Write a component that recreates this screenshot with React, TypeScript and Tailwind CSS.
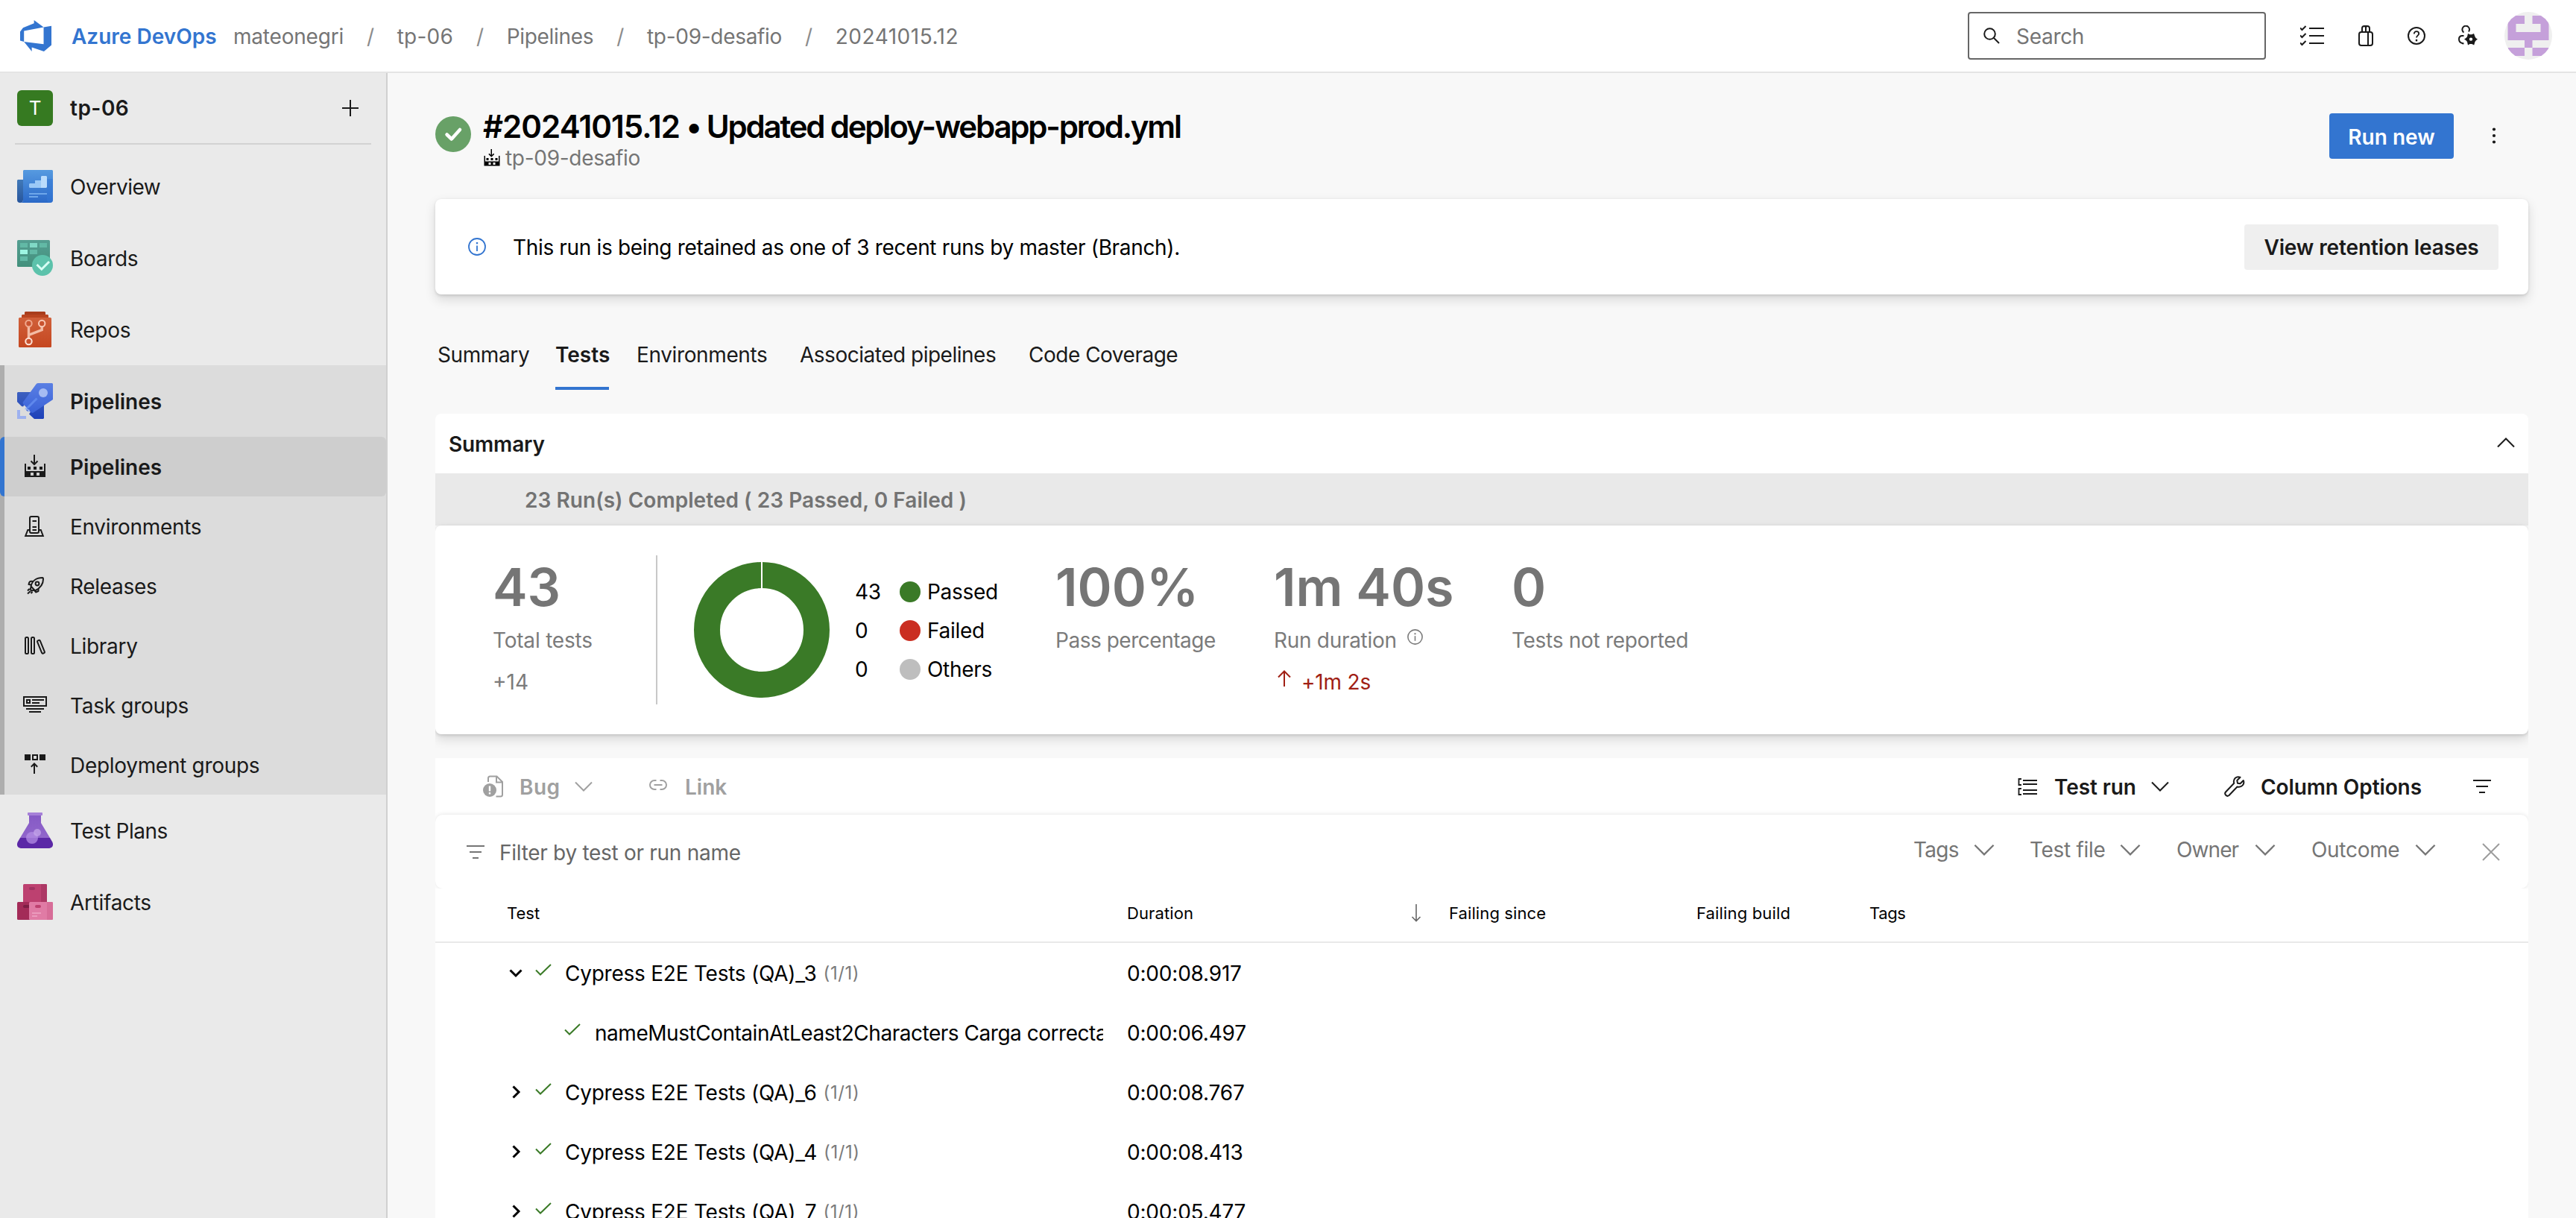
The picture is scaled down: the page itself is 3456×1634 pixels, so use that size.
import React from 'react';

type IconProps = { className?: string };

/* ---------- shared glyphs ---------- */

const BuildIcon = ({ className }: IconProps) => (
  <svg viewBox="0 0 32 32" className={className} fill="currentColor">
    <path fillRule="evenodd" d="M2 12h2v10h24V12h2v18H2zM10 24v4h4v-4zM18 24v4h4v-4z" />
    <path d="M6 16h4v4H6zM14 16h4v4h-4zM22 16h4v4h-4z" />
    <path d="M15 0v12.500M10.500 8.500l4.500 4.500 4.500-4.500" fill="none" stroke="currentColor" strokeWidth="2" />
  </svg>
);

const ChevronDown = ({ className }: IconProps) => (
  <svg viewBox="0 0 24 14" className={className} fill="none" stroke="currentColor" strokeWidth="2">
    <path d="M1 1.500l11 11 11-11" />
  </svg>
);

const InfoIcon = ({ className }: IconProps) => (
  <svg viewBox="0 0 24 24" className={className} fill="none" stroke="currentColor" strokeWidth="1.800">
    <circle cx="12" cy="12" r="11" />
    <path d="M12 10.500v7.500" />
    <path d="M12 6v2.300" strokeWidth="2.300" />
  </svg>
);

const FilterIcon = ({ className }: IconProps) => (
  <svg viewBox="0 0 24 20" className={className} fill="none" stroke="currentColor" strokeWidth="2">
    <path d="M0 2h24M4 10h16M8 18h8" />
  </svg>
);

const CheckIcon = ({ className }: IconProps) => (
  <svg viewBox="0 0 22 16" className={className} fill="none" stroke="#3a7a27" strokeWidth="2">
    <path d="M1 8.500l6 6L21 1" />
  </svg>
);

/* ---------- sidebar icons ---------- */

const OverviewIcon = () => (
  <svg viewBox="0 0 48 48" className="size-12">
    <defs>
      <linearGradient id="ov" x1="0" y1="0" x2="0" y2="1">
        <stop offset="0" stopColor="#569ae0" />
        <stop offset="1" stopColor="#2b69c8" />
      </linearGradient>
      <linearGradient id="ovl" x1="0" y1="0" x2="0" y2="1">
        <stop offset="0" stopColor="#4179b8" />
        <stop offset="1" stopColor="#27559c" />
      </linearGradient>
    </defs>
    <path d="M1 15h7v27a4 4 0 0 1-8 0V16z" fill="url(#ovl)" />
    <path d="M9 2h38l1 1v39a4 4 0 0 1-4 4H4a4 4 0 0 0 4-4V3z" fill="url(#ov)" />
    <path d="M40 14h8v28a4 4 0 0 1-8 0z" fill="#3478d6" opacity=".5" />
    <path d="M16 21l1-1h7v-4h8v10H17l-1-1z" fill="#9cc9f6" />
    <path d="M32 11l1-1h6l1 1v14l-1 1h-7z" fill="#bbdcfc" />
    <path d="M16 33h24v2H16zM16 37h12v2H16z" fill="#6ea7ea" />
  </svg>
);

const BoardsIcon = () => (
  <svg viewBox="0 0 48 48" className="size-12">
    <defs>
      <linearGradient id="bd" x1="0" y1="0" x2="0" y2="1">
        <stop offset="0" stopColor="#559f92" />
        <stop offset="1" stopColor="#43907c" />
      </linearGradient>
    </defs>
    <rect width="44" height="36" rx="1.500" fill="url(#bd)" />
    <path d="M4 4h10v6H4zM30 4h10v6H30zM17 13h10v6H17zM4 22h10v6H4z" fill="#62b9a6" />
    <path d="M17 4h10v6H17z" fill="#80d9c6" />
    <path d="M4 13h10v6H4z" fill="#9df5e2" />
    <circle cx="34" cy="34" r="14" fill="#5cc2ab" />
    <path d="M26.500 33l6.300 6.200L43 29" fill="none" stroke="#d8fff5" strokeWidth="3" />
  </svg>
);

const ReposIcon = () => (
  <svg viewBox="0 0 48 48" className="size-12">
    <defs>
      <linearGradient id="rp" x1="0" y1="0" x2="0" y2="1">
        <stop offset="0" stopColor="#d0603a" />
        <stop offset="1" stopColor="#c54720" />
      </linearGradient>
    </defs>
    <path d="M11 0h26l1 1v4H10V1z" fill="#a93d1c" />
    <path d="M7 4h34l1 1v4H6V5z" fill="#b94520" />
    <rect x="2" y="8" width="44" height="40" rx="1.500" fill="url(#rp)" />
    <path d="M15.500 20v16M33.200 20v4.500L15.500 31.500v4" fill="none" stroke="#f3bba4" strokeWidth="3.400" />
    <g fill="#c95330" stroke="#f9c9b5" strokeWidth="2">
      <circle cx="15.500" cy="16" r="4.200" stroke="#f0a98e" />
      <circle cx="33.200" cy="16" r="4.200" />
      <circle cx="15.500" cy="40" r="4.200" stroke="#fde3d8" />
    </g>
  </svg>
);

const PipelinesIcon = () => (
  <svg viewBox="0 0 48 48" className="size-12">
    <defs>
      <linearGradient id="pl" x1="0" y1="0" x2="0" y2="1">
        <stop offset="0" stopColor="#5a7fe3" />
        <stop offset="1" stopColor="#3a62d8" />
      </linearGradient>
      <linearGradient id="plb" x1="0" y1="0" x2="0" y2="1">
        <stop offset="0" stopColor="#3d60bf" />
        <stop offset="1" stopColor="#1d41ba" />
      </linearGradient>
    </defs>
    <path d="M1 12h20L9 30l-1 1.500L6 31l-6-6V13zM36 26v21l-1 1H23l-7-6.500 2-3z" fill="url(#plb)" />
    <path d="M28 0h19l1 1v21L21 40l-3-1-2-2-2 1-2-2 1-3-5-5-.500-2L25 2q1-2 3-2z" fill="url(#pl)" />
    <path d="M26.500 20.500L13 34" stroke="#5f88ec" strokeWidth="3" />
    <circle cx="35" cy="13" r="6" fill="#a6bbf2" />
    <path d="M10 35l2-3 2 3 3 1-2 3-1-3z" fill="#9fb9f4" />
    <path d="M0 36h4v8h8v4H0z" fill="#9db1ef" />
  </svg>
);

const TestPlansIcon = () => (
  <svg viewBox="0 0 48 48" className="size-12">
    <defs>
      <linearGradient id="tp" x1="0" y1="0" x2="0" y2="1">
        <stop offset="0" stopColor="#8559c5" />
        <stop offset="1" stopColor="#9166cb" />
      </linearGradient>
    </defs>
    <path d="M16 2h16v12l12 20H4l12-20z" fill="url(#tp)" />
    <path d="M4 34h40l3.200 5.500C49.500 44 47 48 43 48H5c-4 0-6.500-4-4.200-8.500z" fill="#5b28a6" />
    <rect x="14" width="20" height="4" rx=".8" fill="#a680d8" />
    <circle cx="20" cy="34" r="8" fill="#b48ee4" opacity=".75" />
    <circle cx="27" cy="27" r="5" fill="#c4a6ea" opacity=".75" />
  </svg>
);

const ArtifactsIcon = () => (
  <svg viewBox="0 0 48 48" className="size-12">
    <rect x="8" width="32" height="25" rx="1.500" fill="#bd4170" />
    <path d="M32 0h7l1 1v24h-8z" fill="#ad3865" />
    <rect y="24" width="20" height="24" rx="1.500" fill="#a32b58" />
    <rect x="16" y="24" width="32" height="24" rx="1.500" fill="#e07ba5" />
    <path d="M40 24h7l1 1v22l-1 1h-7z" fill="#d76d98" />
    <rect x="16" y="4" width="8" height="4" rx="2" fill="#a03362" />
    <path d="M10 28h6v4h-6a2 2 0 0 1 0-4z" fill="#7d1d43" />
    <rect x="24" y="28" width="8" height="4" rx="2" fill="#bd4170" />
    <path d="M20 38h12v2H20zM20 42h7v2h-7z" fill="#eb9bbd" />
  </svg>
);

const EnvironmentsIcon = () => (
  <svg viewBox="0 0 32 32" className="size-8" fill="none" stroke="currentColor" strokeWidth="2">
    <rect x="9" y="3" width="12" height="22" rx="2" />
    <path d="M12.500 9H18M12.500 17H18M12.500 21H18M9 21H6.300L3.200 29h23.600l-3-8H21" />
  </svg>
);

const ReleasesIcon = () => (
  <svg viewBox="0 0 32 32" className="size-8" fill="none" stroke="currentColor" strokeWidth="2" strokeLinejoin="round">
    <path d="M10.500 16.500C12 9 18 5 26 5c1 0 1 1 1 2 0 7-4 12-11 15.500z" />
    <circle cx="19" cy="13" r="2.400" />
    <path d="M13 10c-3-1-5 0-5.500 4l3 .500M20.500 20v3l-3.500 1.500-1.500-2M11 17l-1.500 3.500 2 2 4-1M6 22.500l2.500-2.500M6 26.500l4-3.500M10.500 26l2-2" />
  </svg>
);

const LibraryIcon = () => (
  <svg viewBox="0 0 32 32" className="size-8" fill="none" stroke="currentColor" strokeWidth="2">
    <rect x="3" y="5" width="4" height="22" rx="1.500" />
    <rect x="11" y="5" width="4" height="22" rx="1.500" />
    <rect x="22" y="8.500" width="4" height="18.500" rx="1.500" transform="rotate(-22 24 17.800)" />
  </svg>
);

const TaskGroupsIcon = () => (
  <svg viewBox="0 0 32 32" className="size-8" fill="none" stroke="currentColor" strokeWidth="2">
    <path d="M1 5h30v12H1zM5 9h4v4H5zM12 9h16M12 13h10M4 21h24M8 25h16" />
  </svg>
);

const DeploymentIcon = () => (
  <svg viewBox="0 0 32 32" className="size-8" fill="none" stroke="currentColor" strokeWidth="2">
    <path d="M3 3h6v6H3zM23 3h6v6h-6z" fill="currentColor" />
    <path d="M13 3h6v6h-6zM15 28V14.500M10.800 18.700L15 14.500l4.200 4.200" />
  </svg>
);

/* ---------- header ---------- */

const Slash = () => <span className="w-[71.700px] text-center text-[#8c8c8c]">/</span>;

const Avatar = () => (
  <svg viewBox="0 0 64 64" className="ml-9 size-16 rounded-full bg-[#efefef]" fill="#c5a0da">
    <path d="M4.500 5H27v11H15.500v11h33V16H37.500V5h22v33h-22v10h22v11h-22V48H27v11H4.500V48H27V38H4.500z" />
  </svg>
);

const Header = () => (
  <header className="flex h-[98px] shrink-0 items-center border-b-2 border-[#e4e4e4] bg-white pr-8 pl-[27px]">
    <svg viewBox="0 0 24 24" className="size-[42px]" fill="#3375d0">
      <path d="M0 8.877L2.247 5.910l8.405-3.416V.022l7.370 5.393L2.966 8.338v8.225L0 15.707zm24-4.450v14.651l-5.753 4.900-9.303-3.057v3.056l-5.978-7.416 15.057 1.798V5.415z" />
    </svg>
    <span className="mt-0.5 ml-[27px] w-[217px] font-semibold tracking-normal text-[#3375d0]">Azure DevOps</span>
    <nav className="mt-0.5 flex items-center text-[#757575]">
      <span className="tracking-[-0.2px]">mateonegri</span>
      <Slash />
      <span className="tracking-[0.2px]">tp-06</span>
      <Slash />
      <span>Pipelines</span>
      <Slash />
      <span>tp-09-desafio</span>
      <Slash />
      <span className="tracking-[0.5px]">20241015.12</span>
    </nav>
    <div className="ml-auto flex items-center text-[#1a1a1a]">
      <div className="flex h-16 w-[400px] items-center rounded border-2 border-[#666] pl-[19px]">
        <svg viewBox="0 0 22 22" className="size-[22px]" fill="none" stroke="currentColor" strokeWidth="2">
          <circle cx="8.500" cy="8.500" r="7.300" />
          <path d="M13.500 13.500L21 21" />
        </svg>
        <span className="mt-0.5 ml-[22px] text-[#757575]">Search</span>
      </div>
      <svg viewBox="0 0 32 28" className="ml-[46px] h-7 w-8" fill="none" stroke="currentColor" strokeWidth="2">
        <path d="M12 4h20M12 14h20M12 24h20M0 3.500l2.500 2.500L7.500 1M0 13.500L2.500 16l5-5M0 23.500L2.500 26l5-5" />
      </svg>
      <svg viewBox="0 0 20 28" className="ml-[46px] h-7 w-5" fill="none" stroke="currentColor" strokeWidth="2">
        <rect x="1" y="9" width="18" height="18" rx="3" />
        <path d="M13 9v18M5 9V4q0-3 3-3h4q3 0 3 3v5M10 9V3.500q0-2.500 2-2.500M10 3.500Q10 1 8 1" />
      </svg>
      <svg viewBox="0 0 24 24" className="ml-[46px] size-6" fill="none" stroke="currentColor" strokeWidth="2">
        <circle cx="12" cy="12" r="11" />
        <path d="M8.800 9.500C8.800 7.500 10 6.200 12 6.200s3.200 1.300 3.200 3c0 2.300-3.200 2.600-3.200 5.300" strokeWidth="1.800" />
        <path d="M12 16.800v2.600" strokeWidth="2.400" />
      </svg>
      <svg viewBox="0 0 26 28" className="ml-11 h-7 w-[26px]" fill="none" stroke="currentColor" strokeWidth="2">
        <path d="M7.500 9.500A4.800 4.800 0 1 1 14 8.500M7.500 14H5.500C2.500 14 1 16 1 18.500c0 3 2.500 5.500 6.500 6" />
        <g fill="currentColor" stroke="none">
          <path
            fillRule="evenodd"
            d="M13 11l2.500 1.300h2.700L21 11l1.500 4.200 1.300 2L26 18.500l-2.200 1.800-1.300 1.700-1.300 4.500-2.900-1.500h-2.700L13 26.500l-1-4.500-1.500-1.700-2.500-1.800 2.500-1.500 1.500-1.800zM17 16.400a2.200 2.200 0 1 0 0 4.400 2.200 2.200 0 0 0 0-4.400z"
          />
        </g>
      </svg>
      <Avatar />
    </div>
  </header>
);

/* ---------- sidebar ---------- */

const HubItem = ({ icon, label, bold, tight }: { icon: React.ReactNode; label: string; bold?: boolean; tight?: boolean }) => (
  <div className="flex h-24 items-center gap-[23px] pl-[23px]">
    {icon}
    <span className={bold ? 'mt-0.5 font-semibold tracking-normal' : tight ? 'mt-0.5 tracking-[-0.500px]' : 'mt-0.5'}>{label}</span>
  </div>
);

const SubItem = ({ icon, label, active }: { icon: React.ReactNode; label: string; active?: boolean }) => (
  <div
    className={
      active
        ? '-ml-1.5 flex h-20 items-center gap-[31px] overflow-hidden rounded-md border-l-[6px] border-[#3375d0] bg-[#cecece] pl-[25px] font-semibold tracking-normal'
        : 'flex h-20 items-center gap-[31px] pl-[25px]'
    }
  >
    {icon}
    <span className="mt-0.5">{label}</span>
  </div>
);

const Sidebar = () => (
  <aside className="w-[520px] shrink-0 border-r-2 border-[#d0d0d0] bg-[#eaeaea] text-[#1a1a1a]">
    <div className="flex h-[94px] items-center pr-[37px] pl-[23px]">
      <span className="flex size-12 items-center justify-center rounded-md bg-[#367a21] text-[26px] text-white">T</span>
      <span className="ml-[23px] font-semibold tracking-[0.500px]">tp-06</span>
      <svg viewBox="0 0 22 22" className="ml-auto size-[22px]" fill="none" stroke="currentColor" strokeWidth="2">
        <path d="M11 0v22M0 11h22" />
      </svg>
    </div>
    <div className="mx-5 mb-2 h-0.5 bg-[#d2d2d2]" />
    <HubItem icon={<OverviewIcon />} label="Overview" tight />
    <HubItem icon={<BoardsIcon />} label="Boards" />
    <HubItem icon={<ReposIcon />} label="Repos" />
    <div className="border-l-[6px] border-[#aeaeae] bg-[#dcdcdc]">
      <div className="-ml-1.5">
        <HubItem icon={<PipelinesIcon />} label="Pipelines" bold />
      </div>
      <SubItem icon={<BuildIcon className="size-8" />} label="Pipelines" active />
      <SubItem icon={<EnvironmentsIcon />} label="Environments" />
      <SubItem icon={<ReleasesIcon />} label="Releases" />
      <SubItem icon={<LibraryIcon />} label="Library" />
      <SubItem icon={<TaskGroupsIcon />} label="Task groups" />
      <SubItem icon={<DeploymentIcon />} label="Deployment groups" />
    </div>
    <HubItem icon={<TestPlansIcon />} label="Test Plans" tight />
    <HubItem icon={<ArtifactsIcon />} label="Artifacts" />
  </aside>
);

/* ---------- main ---------- */

const TitleBar = () => (
  <div className="flex h-[169px] pt-[44px]">
    <svg viewBox="0 0 48 48" className="mt-3.5 size-12" fill="none">
      <circle cx="24" cy="24" r="24" fill="#68a167" />
      <path d="M15.500 24.500l6.300 6L33 18" stroke="#fff" strokeWidth="4.500" strokeLinecap="round" strokeLinejoin="round" />
    </svg>
    <div className="ml-4">
      <h1 className="h-14 text-[42px] leading-[56px] font-semibold tracking-[-2.200px] text-black">
        <span className="tracking-[-0.930px]">#20241015.12</span>
        <span className="tracking-[-2.200px]"> • </span>Updated deploy-webapp-prod.yml
      </h1>
      <div className="flex h-7 items-center gap-1.5">
        <BuildIcon className="size-6" />
        <span className="text-[#757575]">tp-09-desafio</span>
      </div>
    </div>
    <button className="mt-2.5 ml-auto h-[61px] w-[167px] rounded bg-[#3375d0] pt-0.5 font-semibold tracking-normal text-white">Run new</button>
    <svg viewBox="0 0 6 24" className="mt-7 mr-[43px] ml-[51px] h-6 w-1.5" fill="#1a1a1a">
      <circle cx="3" cy="3.500" r="2.100" />
      <circle cx="3" cy="12" r="2.100" />
      <circle cx="3" cy="20.500" r="2.100" />
    </svg>
  </div>
);

const Banner = () => (
  <div className="flex h-32 items-center rounded-lg bg-white pr-10 pl-11 shadow-[0_6.400px_14.400px_rgba(0,0,0,0.130),0_1.200px_3.600px_rgba(0,0,0,0.110)]">
    <InfoIcon className="size-6 text-[#3375d0]" />
    <span className="mt-0.5 ml-9 tracking-[-0.340px] text-black">This run is being retained as one of 3 recent runs by master (Branch).</span>
    <button className="ml-auto h-[61px] w-[341px] rounded bg-[#efefef] pt-0.5 font-semibold tracking-[-0.120px] text-[#1a1a1a]">View retention leases</button>
  </div>
);

const Tabs = () => (
  <div className="flex h-[160px] items-start pt-11 pl-[3px] leading-[74px] text-[#1a1a1a]">
    <span className="w-[158px] tracking-[-0.400px]">Summary</span>
    <span className="mr-[37px] w-[72px] border-b-4 border-[#3375d0] pb-[6px] font-semibold tracking-normal">Tests</span>
    <span className="w-[219px] tracking-[-0.380px]">Environments</span>
    <span className="w-[307px] tracking-[-0.490px]">Associated pipelines</span>
    <span className="tracking-[-0.490px]">Code Coverage</span>
  </div>
);

const Stat = ({ value, label, className, children }: { value: string; label: React.ReactNode; className: string; children?: React.ReactNode }) => (
  <div className={className}>
    <div className="h-[84px] text-[70px] leading-[86px] font-semibold tracking-normal text-[#757575]">{value}</div>
    <div className="mt-[15px] flex h-[30px] items-center text-[#7b7b7b]">{label}</div>
    <div className="mt-[26px] flex h-[30px] items-center text-[#7b7b7b]">{children}</div>
  </div>
);

const legend = [
  { n: '43', color: 'bg-[#3a7a27]', label: 'Passed' },
  { n: '0', color: 'bg-[#ca2e21]', label: 'Failed' },
  { n: '0', color: 'bg-[#bebebe]', label: 'Others' },
];

const SummaryCard = () => (
  <section className="overflow-x-clip">
    <div className="flex h-20 items-center justify-between rounded-t-lg bg-white pr-[18px] pl-[18px]">
      <span className="mt-0.5 font-semibold tracking-[-0.150px] text-[#1a1a1a]">Summary</span>
      <ChevronDown className="mb-0.5 h-3.5 w-6 rotate-180 text-[#1a1a1a]" />
    </div>
    <div className="h-[70px] bg-[#e9e9e9] pl-[120px] leading-[72px] font-semibold tracking-[0.050px] text-[#737373]">
      23 Run(s) Completed ( 23 Passed, 0 Failed )
    </div>
    <div className="flex h-[280px] rounded-lg bg-white pt-10 shadow-[0_6.400px_14.400px_rgba(0,0,0,0.130),0_1.200px_3.600px_rgba(0,0,0,0.110)]">
      <Stat value="43" label={<span className="tracking-[-0.2px]">Total tests</span>} className="ml-[77px] w-[219px]">
        <span className="tracking-normal">+14</span>
      </Stat>
      <div className="h-[200px] w-0.5 bg-[#c8c8c8]" />
      <svg viewBox="0 0 182 182" className="mt-[9px] ml-[49px] size-[182px]" fill="none">
        <circle cx="91" cy="91" r="73.500" stroke="#3a7a27" strokeWidth="35" />
        <path d="M91 0v36" stroke="#fff" strokeWidth="2" />
      </svg>
      <div className="mt-[23px] ml-[34px] w-[269px] text-black">
        {legend.map((l) => (
          <div key={l.label} className="flex h-[52px] items-center">
            <span className="w-[60px]">{l.n}</span>
            <span className={`mr-[9px] size-7 rounded-full ${l.color}`} />
            <span>{l.label}</span>
          </div>
        ))}
      </div>
      <Stat value="100%" label={<span className="tracking-[-0.470px]">Pass percentage</span>} className="w-[293px]" />
      <Stat
        value="1m 40s"
        className="w-[319px]"
        label={
          <>
            <span>Run duration</span>
            <InfoIcon className="mb-2.5 ml-[14px] size-[21px]" />
          </>
        }
      >
        <svg viewBox="0 0 18 22" className="mb-2.5 ml-[5px] h-[22px] w-[18px] text-[#a02014]" fill="none" stroke="currentColor" strokeWidth="2">
          <path d="M9 22V1.500M1 9.500l8-8 8 8" />
        </svg>
        <span className="ml-[14px] tracking-[-0.2px] text-[#a02014]">+1m 2s</span>
      </Stat>
      <Stat value="0" label={<span>Tests not reported</span>} className="w-[300px]" />
    </div>
  </section>
);

const Toolbar = () => (
  <div className="flex h-[76px] items-center bg-white pr-[50px] pl-16 font-semibold tracking-normal text-[#1a1a1a]">
    <div className="flex items-center text-[#a0a0a0]">
      <svg viewBox="0 0 28 30" className="h-[30px] w-7" fill="none" stroke="currentColor" strokeWidth="2">
        <path d="M7 9V4q0-2.500 2.500-2.500h9L26 9v17q0 2.500-2.500 2.500h-6M18 2v7.500h8" />
        <circle cx="9" cy="20" r="9" fill="currentColor" stroke="none" />
        <path d="M9 14.500v7M9 23v2.500" stroke="#fff" strokeWidth="2.400" />
      </svg>
      <span className="mt-0.5 ml-[21px] w-[74px] tracking-[0.500px]">Bug</span>
      <ChevronDown className="h-3.5 w-6" />
      <svg viewBox="0 0 24 14" className="mb-1 ml-[76px] h-3.5 w-6" fill="none" stroke="currentColor" strokeWidth="2">
        <path d="M9.500 1H7a6 6 0 0 0 0 12h2.500M14.500 1H17a6 6 0 0 1 0 12h-2.500M6.500 7h11" />
      </svg>
      <span className="mt-0.5 ml-[24px]">Link</span>
    </div>
    <svg viewBox="0 0 26 24" className="ml-auto h-6 w-[26px]" fill="none" stroke="currentColor" strokeWidth="2">
      <path d="M7 4h19M7 9h19M7 17h19M7 22h19M5 2H1.500v8H5M5 15H1.500v8H5" strokeWidth="1.800" />
    </svg>
    <span className="mt-0.5 ml-[23px] w-[130px] tracking-[-0.1px]">Test run</span>
    <ChevronDown className="h-3.5 w-6" />
    <svg viewBox="0 0 28 28" className="ml-[74px] size-7" fill="none" stroke="currentColor" strokeWidth="2" strokeLinejoin="round">
      <path d="M21.500 1.800c-5-2-10 2-8.300 8L2 21.500a3.200 3.200 0 0 0 4.500 4.500L17.500 14.500c6 1.500 10.300-3.500 8.300-8.500L21.500 10.300 18 9.800 17.300 6z" />
    </svg>
    <span className="mt-0.5 ml-[21px] w-[285px] tracking-[-0.1px]">Column Options</span>
    <FilterIcon className="h-5 w-6" />
  </div>
);

const FilterDrop = ({ label, className }: { label: string; className: string }) => (
  <span className={`flex items-center justify-between ${className}`}>
    <span>{label}</span>
    <ChevronDown className="h-4 w-7" />
  </span>
);

const FilterBar = () => (
  <div className="overflow-x-clip bg-white">
    <div className="flex h-[99px] items-center rounded-[10px] bg-white pr-[38px] pb-[5px] pl-[42px] text-[#757575] shadow-[0_0_6px_rgba(0,0,0,0.120)]">
      <FilterIcon className="mt-1.5 h-5 w-6" />
      <span className="mt-2 ml-5 tracking-[-0.290px] text-[#666]">Filter by test or run name</span>
      <div className="ml-auto flex items-center">
        <FilterDrop label="Tags" className="mr-[47px] w-[109px] tracking-[-0.700px]" />
        <FilterDrop label="Test file" className="mr-12 w-[149px]" />
        <FilterDrop label="Owner" className="mr-12 w-[133px] tracking-[-0.900px]" />
        <FilterDrop label="Outcome" className="mr-[62px] w-[167px]" />
        <svg viewBox="0 0 24 24" className="mt-1.5 size-6" fill="none" stroke="#9c9c9c" strokeWidth="2">
          <path d="M1 1l22 22M23 1L1 23" />
        </svg>
      </div>
    </div>
  </div>
);

const rows = [
  { name: 'Cypress E2E Tests (QA)_3', duration: '0:00:08.917', open: true },
  { name: 'nameMustContainAtLeast2Characters Carga correcta', duration: '0:00:06.497', child: true },
  { name: 'Cypress E2E Tests (QA)_6', duration: '0:00:08.767' },
  { name: 'Cypress E2E Tests (QA)_4', duration: '0:00:08.413' },
  { name: 'Cypress E2E Tests (QA)_7', duration: '0:00:05.477' },
];

const TestTable = () => (
  <div className="relative bg-white">
    <div className="flex h-[73px] items-center border-b-2 border-[#e9e9e9] pb-[6px] pl-24 text-[22px] tracking-[0.100px] text-black">
      <span className="w-[832px] tracking-normal">Test</span>
      <span className="w-[381px]">Duration</span>
      <svg viewBox="0 0 14 24" className="h-6 w-3.5" fill="none" stroke="#666" strokeWidth="1.600">
        <path d="M7 0v22M1.500 17L7 22.500l5.500-5.500" />
      </svg>
      <span className="ml-[37px] w-[332px]">Failing since</span>
      <span className="w-[232px] tracking-[0.150px]">Failing build</span>
      <span className="tracking-[-0.400px]">Tags</span>
    </div>
    {rows.map((r) => (
      <div key={r.name} className="flex h-20 items-center text-black">
        <div className={`flex w-[896px] items-center overflow-hidden whitespace-nowrap ${r.child ? 'pl-[173px]' : 'pl-[98px]'}`}>
          {!r.child && (
            <svg viewBox="0 0 20 20" className={`mr-4 size-5 ${r.open ? '' : '-rotate-90'}`} fill="none" stroke="currentColor" strokeWidth="3">
              <path d="M2.500 6.500L10 14l7.500-7.500" />
            </svg>
          )}
          <CheckIcon className="mb-2 h-4 w-[22px] shrink-0" />
          <span className={r.child ? 'mt-0.5 ml-[19px] tracking-[-0.470px]' : 'mt-0.5 ml-[18px] tracking-[-0.240px]'}>{r.name}</span>
          {!r.child && <span className="mt-0.5 ml-[9px] text-[24px] tracking-[0.600px] text-[#7b7b7b]">(1/1)</span>}
        </div>
        <span className="mt-0.5 ml-8 tracking-[-0.2px]">{r.duration}</span>
      </div>
    ))}
  </div>
);

export default function App() {
  return (
    <div className="flex h-[1634px] w-[3456px] flex-col overflow-hidden bg-[#f8f8f8] font-['Inter',sans-serif] text-[28px] leading-[34px] tracking-[-0.3px]">
      <Header />
      <div className="flex min-h-0 flex-1">
        <Sidebar />
        <main className="flex min-w-0 flex-1 flex-col px-16 *:shrink-0">
          <TitleBar />
          <Banner />
          <Tabs />
          <SummaryCard />
          <div className="mt-8">
            <Toolbar />
            <FilterBar />
            <TestTable />
          </div>
        </main>
      </div>
    </div>
  );
}
